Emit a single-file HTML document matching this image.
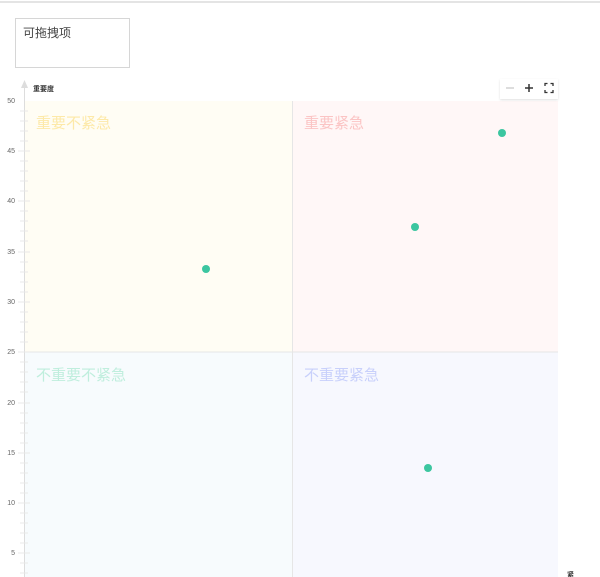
<!DOCTYPE html>
<html><head><meta charset="utf-8"><style>
body{margin:0;width:600px;height:577px;overflow:hidden;background:#fff;font-family:"Liberation Sans","Noto Sans CJK SC",sans-serif;position:relative}
.a{position:absolute}
</style></head><body>
<div class="a" style="left:0;top:1px;width:600px;height:2px;background:#e4e4e4"></div>
<div class="a" style="left:15px;top:18px;font-size:12px;color:#444;padding:5px 7px;box-sizing:border-box;width:115px;height:50px;border:1px solid #d6d6d6">可拖拽项</div>
<svg class="a" style="left:0;top:0" width="600" height="577" font-family="Liberation Sans, Noto Sans CJK SC, sans-serif">
<rect x="25" y="101" width="267" height="251" fill="#fffdf4"/>
<rect x="292" y="101" width="266" height="251" fill="#fff7f7"/>
<rect x="25" y="352" width="267" height="225" fill="#f7fbfd"/>
<rect x="292" y="352" width="266" height="225" fill="#f7f8fe"/>
<line x1="25" y1="352" x2="558" y2="352" stroke="#e6e6e6" stroke-width="1"/>
<line x1="292.5" y1="101" x2="292.5" y2="577" stroke="#e6e6e6" stroke-width="1"/>
<line x1="24.5" y1="84" x2="24.5" y2="577" stroke="#ddd" stroke-width="1"/>
<polygon points="24.5,80 21,88 28,88" fill="#ddd"/>
<g stroke="#e8e8e8">
<line x1="20" y1="111" x2="28" y2="111"/><line x1="20" y1="121" x2="28" y2="121"/><line x1="20" y1="131" x2="28" y2="131"/><line x1="20" y1="141" x2="28" y2="141"/>
<line x1="20" y1="161" x2="28" y2="161"/><line x1="20" y1="171" x2="28" y2="171"/><line x1="20" y1="181" x2="28" y2="181"/><line x1="20" y1="191" x2="28" y2="191"/>
<line x1="20" y1="211" x2="28" y2="211"/><line x1="20" y1="221" x2="28" y2="221"/><line x1="20" y1="231" x2="28" y2="231"/><line x1="20" y1="241" x2="28" y2="241"/>
<line x1="20" y1="262" x2="28" y2="262"/><line x1="20" y1="272" x2="28" y2="272"/><line x1="20" y1="282" x2="28" y2="282"/><line x1="20" y1="292" x2="28" y2="292"/>
<line x1="20" y1="312" x2="28" y2="312"/><line x1="20" y1="322" x2="28" y2="322"/><line x1="20" y1="332" x2="28" y2="332"/><line x1="20" y1="342" x2="28" y2="342"/>
<line x1="20" y1="362" x2="28" y2="362"/><line x1="20" y1="372" x2="28" y2="372"/><line x1="20" y1="382" x2="28" y2="382"/><line x1="20" y1="392" x2="28" y2="392"/>
<line x1="20" y1="413" x2="28" y2="413"/><line x1="20" y1="423" x2="28" y2="423"/><line x1="20" y1="433" x2="28" y2="433"/><line x1="20" y1="443" x2="28" y2="443"/>
<line x1="20" y1="463" x2="28" y2="463"/><line x1="20" y1="473" x2="28" y2="473"/><line x1="20" y1="483" x2="28" y2="483"/><line x1="20" y1="493" x2="28" y2="493"/>
<line x1="20" y1="513" x2="28" y2="513"/><line x1="20" y1="523" x2="28" y2="523"/><line x1="20" y1="533" x2="28" y2="533"/><line x1="20" y1="543" x2="28" y2="543"/>
<line x1="20" y1="563" x2="28" y2="563"/><line x1="20" y1="573" x2="28" y2="573"/>
<line x1="18" y1="151" x2="30" y2="151"/><line x1="18" y1="201" x2="30" y2="201"/><line x1="18" y1="252" x2="30" y2="252"/><line x1="18" y1="302" x2="30" y2="302"/><line x1="18" y1="352" x2="30" y2="352"/><line x1="18" y1="403" x2="30" y2="403"/><line x1="18" y1="453" x2="30" y2="453"/><line x1="18" y1="503" x2="30" y2="503"/><line x1="18" y1="553" x2="30" y2="553"/>
</g>
<g font-size="7" fill="#666" text-anchor="end">
<text x="15" y="103">50</text><text x="15" y="153">45</text><text x="15" y="203">40</text><text x="15" y="254">35</text><text x="15" y="304">30</text><text x="15" y="354">25</text><text x="15" y="405">20</text><text x="15" y="455">15</text><text x="15" y="505">10</text><text x="15" y="555">5</text>
</g>
<text x="33" y="91" font-size="7" font-weight="bold" fill="#333">重要度</text>
<text x="567" y="577" font-size="7" font-weight="bold" fill="#333">紧</text>
<g font-size="15">
<text x="36" y="128" fill="#fde9a8">重要不紧急</text>
<text x="304" y="128" fill="#fbc4c4">重要紧急</text>
<text x="36" y="380" fill="#bfeedd">不重要不紧急</text>
<text x="304" y="380" fill="#c8d0fb">不重要紧急</text>
</g>
<g fill="#3cc6a0">
<circle cx="206" cy="269" r="4"/><circle cx="415" cy="227" r="4"/><circle cx="502" cy="133" r="4"/><circle cx="428" cy="468" r="4"/>
</g>
<rect x="500" y="79" width="58" height="20" fill="#fff" style="filter:drop-shadow(0 1px 1px rgba(0,0,0,.12))"/>
<line x1="506" y1="88" x2="514" y2="88" stroke="#bbb" stroke-width="1"/>
<path d="M525 88h8M529 84v8" stroke="#333" stroke-width="1.5"/>
<path d="M545 86v-2.5h2.5M550.5 83.5h2.5v2.5M553 90v2.5h-2.5M547.5 92.5h-2.5v-2.5" stroke="#333" stroke-width="1.3" fill="none"/>
</svg>
</body></html>
